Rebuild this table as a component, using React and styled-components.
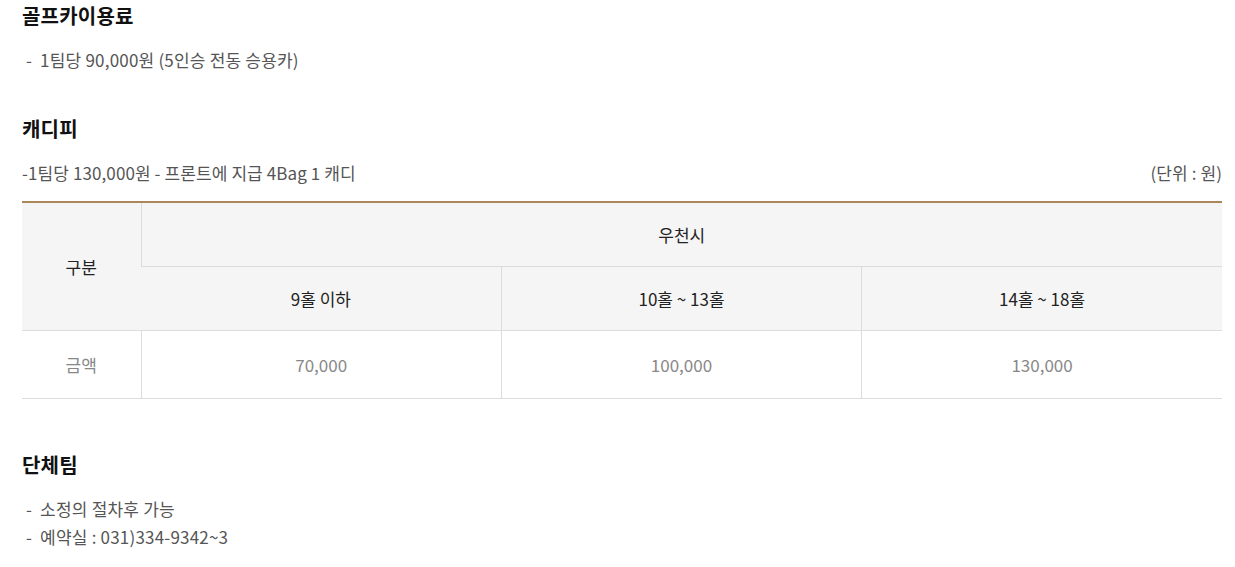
import React from 'react';
import styled, { createGlobalStyle } from 'styled-components';

const Global = createGlobalStyle`
  body {
    margin: 0;
    background: #fff;
    font-family: "Noto Sans CJK KR", "Noto Sans", sans-serif;
  }
`;

const Page = styled.div`
  padding: 0 13px 20px 22px;
`;

const Section = styled.section`
  margin-top: ${(p) => p.$top || 0}px;
`;

const Title = styled.h3`
  margin: 0;
  font-size: 20px;
  line-height: 32px;
  font-weight: 700;
  color: #111;
  letter-spacing: 0.2px;
`;

const List = styled.ul`
  margin: 14px 0 0;
  padding: 0 0 0 4px;
  list-style: none;
`;

const Item = styled.li`
  font-size: 17px;
  line-height: 28px;
  color: #555;
  letter-spacing: 0.2px;
  &::before {
    content: '-';
    margin-right: 8px;
  }
`;

const InfoRow = styled.div`
  margin-top: 14px;
  display: flex;
  justify-content: space-between;
  font-size: 17px;
  line-height: 28px;
  color: #555;
  letter-spacing: 0.1px;
`;

const Table = styled.table`
  margin-top: 14px;
  width: 100%;
  border-collapse: collapse;
  border-top: 2px solid #a8885a;
  table-layout: fixed;
  font-size: 17px;
`;

const Th = styled.th`
  height: 63px;
  padding: 0;
  background: #f5f5f5;
  font-weight: 400;
  color: #222;
  border-bottom: 1px solid #dcdcdc;
  border-left: 1px solid #dcdcdc;
  &:first-child {
    border-left: none;
  }
`;

const Td = styled.td`
  height: 67px;
  padding: 0;
  text-align: center;
  color: #888;
  border-bottom: 1px solid #dcdcdc;
  border-left: 1px solid #dcdcdc;
  &:first-child {
    border-left: none;
  }
`;

const prices = ['70,000', '100,000', '130,000'];

export default function App() {
  return (
    <Page>
      <Global />
      <Section>
        <Title>골프카이용료</Title>
        <List>
          <Item>1팀당 90,000원 (5인승 전동 승용카)</Item>
        </List>
      </Section>

      <Section $top={39}>
        <Title>캐디피</Title>
        <InfoRow>
          <span>-1팀당 130,000원 - 프론트에 지급 4Bag 1 캐디</span>
          <span>(단위 : 원)</span>
        </InfoRow>
        <Table>
          <colgroup>
            <col style={{ width: 119 }} />
            <col />
            <col />
            <col />
          </colgroup>
          <thead>
            <tr>
              <Th rowSpan={2}>구분</Th>
              <Th colSpan={3}>우천시</Th>
            </tr>
            <tr>
              <Th>9홀 이하</Th>
              <Th>10홀 ~ 13홀</Th>
              <Th>14홀 ~ 18홀</Th>
            </tr>
          </thead>
          <tbody>
            <tr>
              <Td>금액</Td>
              {prices.map((p) => (
                <Td key={p}>{p}</Td>
              ))}
            </tr>
          </tbody>
        </Table>
      </Section>

      <Section $top={50}>
        <Title>단체팀</Title>
        <List>
          <Item>소정의 절차후 가능</Item>
          <Item>예약실 : 031)334-9342~3</Item>
        </List>
      </Section>
    </Page>
  );
}
